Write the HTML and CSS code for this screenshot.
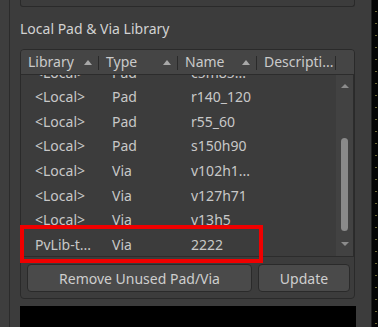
FILE: index.html
```html
<!DOCTYPE html>
<html lang="en">
<head>
    <meta charset="UTF-8">
    <title>Local Pad &amp; Via Library</title>
    <link rel="stylesheet" href="styles.css">
</head>
<body>
    <div class="window">
        <div class="side-left"></div>
        <div class="panel">
            <div class="top-box"></div>
            <h2 class="title">Local Pad &amp; Via Library</h2>
            <div class="group">
                <div class="table">
                    <div class="thead">
                        <div class="th">Library<span class="sort"></span></div>
                        <div class="th">Type<span class="sort"></span></div>
                        <div class="th">Name<span class="sort"></span></div>
                        <div class="th">Descripti...</div>
                        <div class="th-spacer"></div>
                    </div>
                    <div class="tbody">
                        <div class="rows">
                            <div class="rows-inner">
                                <div class="tr"><span>&lt;Local&gt;</span><span>Pad</span><span>c5m85...</span><span></span></div>
                                <div class="tr"><span>&lt;Local&gt;</span><span>Pad</span><span>r140_120</span><span></span></div>
                                <div class="tr"><span>&lt;Local&gt;</span><span>Pad</span><span>r55_60</span><span></span></div>
                                <div class="tr"><span>&lt;Local&gt;</span><span>Pad</span><span>s150h90</span><span></span></div>
                                <div class="tr"><span>&lt;Local&gt;</span><span>Via</span><span>v102h1...</span><span></span></div>
                                <div class="tr"><span>&lt;Local&gt;</span><span>Via</span><span>v127h71</span><span></span></div>
                                <div class="tr"><span>&lt;Local&gt;</span><span>Via</span><span>v13h5</span><span></span></div>
                                <div class="tr"><span class="lib-pv">PvLib-t...</span><span>Via</span><span>2222</span><span></span></div>
                            </div>
                        </div>
                        <div class="scrollbar">
                            <span class="arrow up"></span>
                            <div class="track"><div class="thumb"></div></div>
                            <span class="arrow down"></span>
                        </div>
                    </div>
                    <div class="highlight"></div>
                </div>
                <div class="buttons">
                    <button class="btn btn-wide">Remove Unused Pad/Via</button>
                    <button class="btn">Update</button>
                </div>
            </div>
            <div class="black-area"></div>
        </div>
        <div class="side-right"></div>
    </div>
</body>
</html>
```

FILE: styles.css
```css
html, body {
    margin: 0;
    padding: 0;
}
body {
    background-color: #3c3c3c;
    font-family: 'Noto Sans', 'Open Sans', sans-serif;
    font-size: 14px;
    color: #c8c8c8;
    width: 378px;
    height: 327px;
    overflow: hidden;
}
.window {
    display: flex;
    height: 327px;
}
.side-left {
    width: 9px;
    background-color: #3e3e3e;
    border-right: 1px solid #2b2b2b;
}
.panel {
    flex: 1;
    padding: 0 16px 0 10px;
    display: flex;
    flex-direction: column;
}
.top-box {
    height: 6px;
    border: 1px solid #2a2a2a;
    border-top: none;
    border-radius: 0 0 3px 3px;
}
.title {
    margin: 13px 0 0;
    font-size: 14px;
    font-weight: normal;
    color: #d2d2d2;
    height: 29px;
    line-height: 18px;
}

/* group with table and buttons */
.group {
    border: 1px solid #2a2a2a;
    border-radius: 4px;
    height: 248px;
    display: flex;
    flex-direction: column;
}
.table {
    position: relative;
    height: 206px;
    display: flex;
    flex-direction: column;
    border-bottom: 1px solid #2c2c2c;
}
.thead {
    display: flex;
    height: 24px;
    background-color: #454545;
    border-bottom: 1px solid #2c2c2c;
    border-radius: 3px 3px 0 0;
}
.th {
    width: 79px;
    position: relative;
    padding-left: 7px;
    box-sizing: border-box;
    line-height: 24px;
    color: #cacaca;
    white-space: nowrap;
}
.th:first-child {
    width: 78px;
}
.th::after {
    content: '';
    position: absolute;
    right: 0;
    top: 6px;
    height: 14px;
    border-right: 1px solid #2a2a2a;
}
.th-spacer {
    flex: 1;
}
.sort {
    position: absolute;
    right: 7px;
    top: 10px;
    width: 0;
    height: 0;
    border-left: 4.5px solid transparent;
    border-right: 4.5px solid transparent;
    border-bottom: 5px solid #a8a8a8;
}
.tbody {
    flex: 1;
    display: flex;
    overflow: hidden;
}
.rows {
    flex: 1;
    overflow: hidden;
}
.rows-inner {
    margin-top: -14.5px;
}
.tr {
    display: flex;
    height: 24.66px;
    line-height: 24.66px;
}
.tr span {
    width: 79px;
    padding-left: 13px;
    box-sizing: border-box;
    white-space: nowrap;
}
.tr span:first-child {
    width: 78px;
    padding-left: 14px;
}
.tr .lib-pv {
    padding-left: 13px;
}
.scrollbar {
    width: 17px;
    background-color: #424242;
    border-right: 1px solid #2c2c2c;
    display: flex;
    flex-direction: column;
    align-items: center;
}
.arrow {
    width: 0;
    height: 0;
    border-left: 4px solid transparent;
    border-right: 4px solid transparent;
}
.arrow.up {
    margin-top: 9px;
    border-bottom: 4px solid #8c8c8c;
}
.arrow.down {
    margin: 8px 0 10px;
    border-top: 4px solid #8c8c8c;
}
.track {
    flex: 1;
    width: 7px;
    display: flex;
    flex-direction: column;
    justify-content: flex-end;
}
.thumb {
    height: 93px;
    background-color: #8a8a8a;
    border-radius: 4px;
    margin-bottom: 3px;
}
.highlight {
    position: absolute;
    left: -1px;
    top: 175px;
    width: 235px;
    height: 30px;
    border: 4px solid #f00000;
}

.buttons {
    display: flex;
    gap: 6px;
    padding: 7px 4px 0 6px;
}
.btn {
    height: 28px;
    width: 92px;
    background-color: #4a4a4a;
    border: 1px solid #2a2a2a;
    border-radius: 4px;
    color: #cecece;
    font-family: inherit;
    font-size: 14px;
    padding: 0;
}
.btn-wide {
    width: 225px;
}
.black-area {
    margin-top: 7px;
    flex: 1;
    background-color: #000;
    margin-right: -1px;
}
.side-right {
    width: 6px;
    border-left: 1px solid #1e1e1e;
    background-color: #050505;
    background-image: repeating-linear-gradient(to bottom, transparent 0, transparent 11px, #6e6a3a 11px, #6e6a3a 12px);
    background-size: 2px 100%;
    background-position: 3px 0;
    background-repeat: no-repeat;
}
```
